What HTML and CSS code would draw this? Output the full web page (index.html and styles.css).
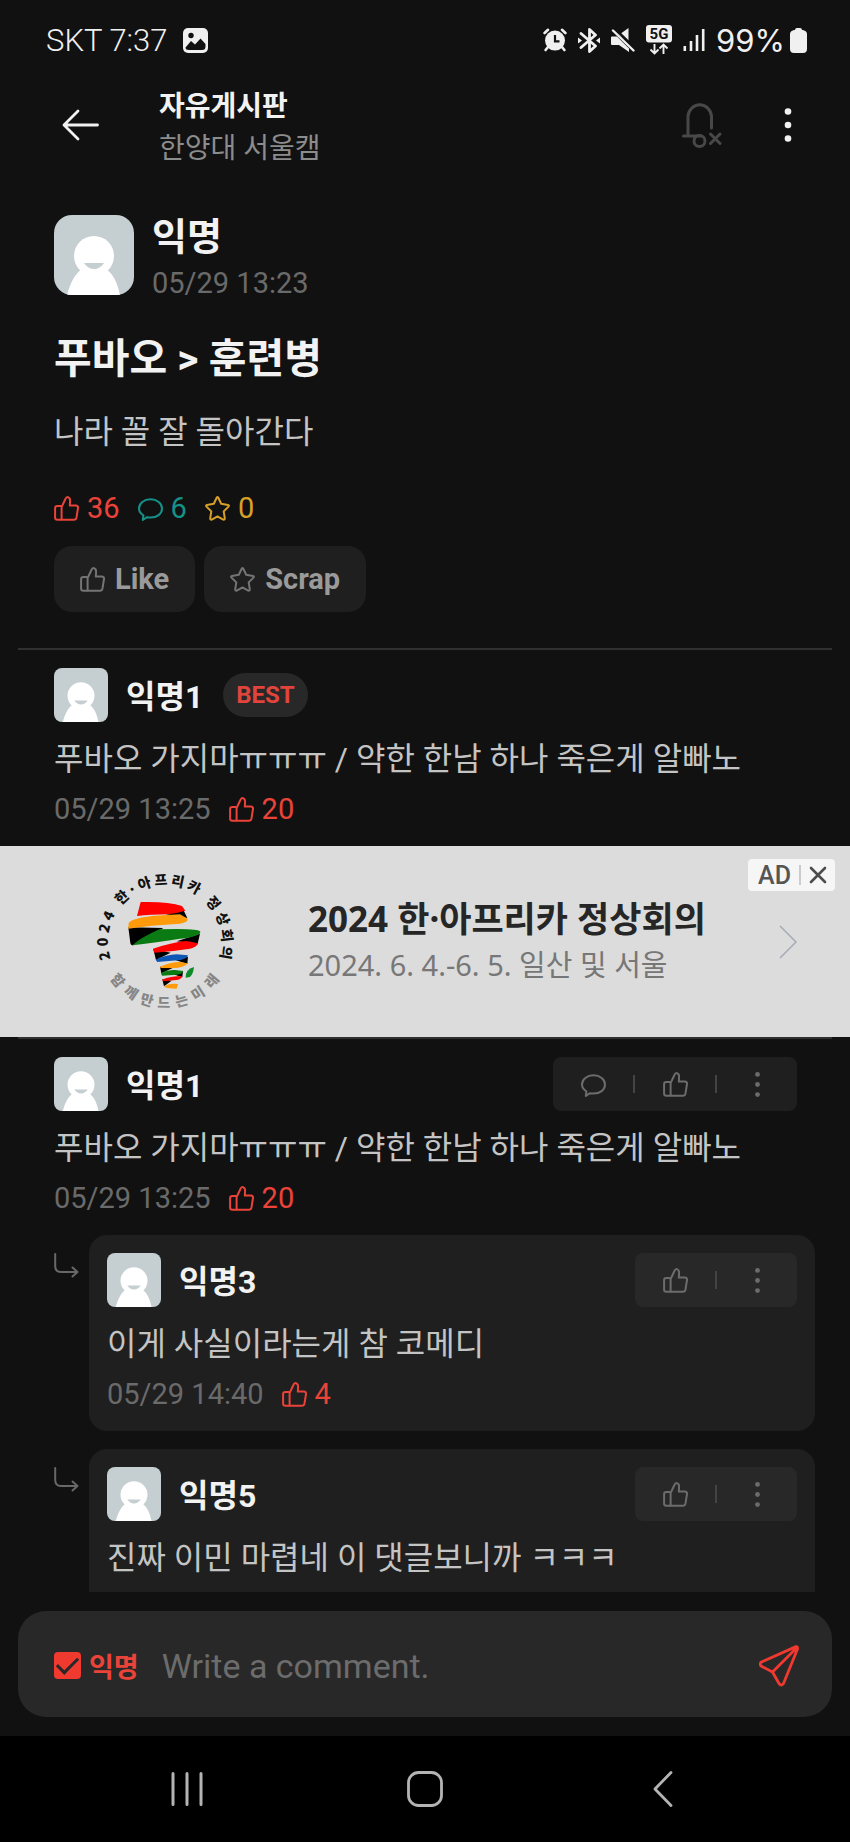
FILE: index.html
```html
<!DOCTYPE html>
<html lang="ko">
<head>
<meta charset="utf-8">
<meta name="viewport" content="width=device-width, initial-scale=1">
<title>자유게시판</title>
<link rel="stylesheet" href="styles.css">
</head>
<body>
<svg class="sprite" aria-hidden="true">
  <symbol id="thumb" viewBox="0 0 25 25">
    <g fill="none" stroke="currentColor" stroke-width="2" stroke-linejoin="round">
      <path d="M7.600 10H3.400C2 10 1.100 10.900 1.100 12.300V21.500C1.100 22.900 2 23.800 3.400 23.800H7.600"/>
      <path d="M7.600 11.200L11.400 3C12.200 1.100 13.200.9 14 1.100C15.600 1.700 16.200 3 16.100 4.800L15.800 9.600H21.800C23.400 9.600 24.200 10.600 24 12L22.500 21.400C22.200 23 21.300 23.800 19.900 23.800H7.600Z"/>
    </g>
  </symbol>
  <symbol id="bubble" viewBox="0 0 25 25">
    <path fill="none" stroke="currentColor" stroke-width="2" stroke-linejoin="round" d="M4.800 24L5.400 19.400C2.500 17.600 1 15.200 1 12.600C1 7.200 6 3.300 12.500 3.300S24 7.200 24 12.600S19 21.600 12.500 21.600C11.300 21.600 10.100 21.500 9 21.200Z"/>
  </symbol>
  <symbol id="star" viewBox="0 0 25 25">
    <path fill="none" stroke="currentColor" stroke-width="2" stroke-linejoin="round" d="M11.700 1.700Q12.500.5 13.300 1.700L16.200 7.800L23 8.900Q24.500 9.400 23.500 10.600L18.700 15.400L19.800 22.300Q19.800 24.100 18.200 23.600L12.500 20.400L6.800 23.600Q5.200 24.100 5.200 22.300L6.300 15.400L1.500 10.600Q.5 9.400 2 8.900L8.800 7.800Z"/>
  </symbol>
  <symbol id="dots" viewBox="0 0 25 25">
    <g fill="currentColor"><circle cx="12.500" cy="2.400" r="2.400"/><circle cx="12.500" cy="12.500" r="2.400"/><circle cx="12.500" cy="22.600" r="2.400"/></g>
  </symbol>
  <symbol id="face" viewBox="0 0 80 80">
    <rect width="80" height="80" fill="#c5ced1"/>
    <path fill="#fff" d="M13 80C17 66 21 59 28 54C36 48 44 48 52 54C59 59 63 66 66 80Z"/>
    <circle cx="40" cy="41" r="20" fill="#fff"/>
    <path fill="#c5ced1" d="M30 48H50C47 52 44 54 40 54S33 52 30 48Z"/>
  </symbol>
  <symbol id="turn" viewBox="0 0 25 25">
    <path fill="none" stroke="currentColor" stroke-width="2" stroke-linecap="round" stroke-linejoin="round" d="M1.200 1V13Q1.200 19 7 19H23.500M18.500 14.500L23.500 19L18.500 23.500"/>
  </symbol>
</svg>

<div class="statusbar">
  <div class="status-left">
    <span>SKT 7:37</span>
    <svg width="25" height="25" viewBox="0 0 25 25"><rect width="25" height="25" rx="5" fill="#f0f0f0"/><circle cx="8" cy="7.500" r="2.700" fill="#111"/><path fill="#111" d="M2.500 19.500L8 13L12 16.500L17.500 10.500L22.500 16V18.500Q22.500 22 19 22H6Q2.500 22 2.500 19.500Z"/></svg>
  </div>
  <div class="status-right">
    <svg width="24" height="24" viewBox="0 0 24 24"><g fill="none" stroke="#f0f0f0" stroke-width="2.600" stroke-linecap="round"><path d="M1.600 5L5 1.800M22.400 5L19 1.800M5 19L2.600 22M19 19L21.400 22"/></g><circle cx="12" cy="12.600" r="10" fill="#f0f0f0"/><path d="M12 7V13.400H16.500" fill="none" stroke="#111" stroke-width="2.200"/></svg>
    <svg width="22" height="25" viewBox="0 0 22 25"><path d="M3 5.500L17.500 18L11.500 23.500V1.500L17.500 7L3 19.500" fill="none" stroke="#f0f0f0" stroke-width="2.800" stroke-linejoin="round" stroke-linecap="round"/><path d="M0 9.500L4 12.500L0 15.500ZM22 9.500L18 12.500L22 15.500Z" fill="#f0f0f0"/></svg>
    <svg width="24" height="24" viewBox="0 0 24 24"><path fill="#f0f0f0" d="M8.500 6.500L17.500 0V13.500ZM1 8.500H6L18 20.500V24L8 17H1Q0 17 0 15.500V9.500Q0 8.500 1 8.500Z"/><path d="M3.500 0L24 20" stroke="#111" stroke-width="2"/><path d="M2 2.500L22.500 22.500" stroke="#f0f0f0" stroke-width="2.400" stroke-linecap="round"/></svg>
    <svg width="26" height="30" viewBox="0 0 26 30"><rect width="26" height="17.500" rx="3" fill="#f0f0f0"/><text class="net" x="13" y="14" text-anchor="middle">5G</text><path d="M8.500 19V28M4.500 24.500L8.500 28.500L12.500 24.500M17.500 29V20M13.500 23.500L17.500 19.500L21.500 23.500" fill="none" stroke="#f0f0f0" stroke-width="1.900"/></svg>
    <svg width="22" height="24" viewBox="0 0 22 24"><path d="M1.800 18V23M8 13V23M14 7V23M20.200 1V23" stroke="#f0f0f0" stroke-width="2.600"/></svg>
    <span class="battery">99%<svg width="17" height="25" viewBox="0 0 17 25"><path fill="#f0f0f0" d="M5 2Q5 0 7 0H10Q12 0 12 2H13Q17 3 17 6V21Q17 25 13 25H4Q0 25 0 21V6Q0 3 4 2Z"/></svg></span>
  </div>
</div>

<header class="topbar">
  <button class="icon-btn" aria-label="뒤로"><svg width="37" height="32" viewBox="0 0 37 32"><path d="M35.500 16H2M16 2L2 16L16 30" fill="none" stroke="#f2f2f2" stroke-width="2.800" stroke-linecap="round" stroke-linejoin="round"/></svg></button>
  <div class="board">
    <h1>자유게시판</h1>
    <p>한양대 서울캠</p>
  </div>
  <button class="icon-btn" aria-label="알림 꺼짐"><svg width="40" height="46" viewBox="0 0 40 46"><g fill="none" stroke="#484848" stroke-width="3" stroke-linecap="round"><path d="M1.500 34H19M6 33V14A11.800 12.300 0 0 1 29.500 14V26"/><circle cx="17.500" cy="39" r="5.500"/><path d="M28.500 32L38 41.500M38 32L28.500 41.500"/></g></svg></button>
  <button class="icon-btn" aria-label="메뉴"><svg width="8" height="34" viewBox="0 0 8 34"><g fill="#f2f2f2"><circle cx="4" cy="3.500" r="3.300"/><circle cx="4" cy="17" r="3.300"/><circle cx="4" cy="30.500" r="3.300"/></g></svg></button>
</header>

<main>
  <article class="post">
    <div class="author">
      <svg class="avatar-lg"><use href="#face"/></svg>
      <div class="author-text">
        <strong>익명</strong>
        <time>05/29 13:23</time>
      </div>
    </div>
    <h2>푸바오 &gt; 훈련병</h2>
    <p class="post-text">나라 꼴 잘 돌아간다</p>
    <div class="stats">
      <span class="stat red"><svg class="icon"><use href="#thumb"/></svg>36</span>
      <span class="stat teal"><svg class="icon"><use href="#bubble"/></svg>6</span>
      <span class="stat gold"><svg class="icon"><use href="#star"/></svg>0</span>
    </div>
    <div class="post-actions">
      <button><svg class="icon"><use href="#thumb"/></svg>Like</button>
      <button><svg class="icon"><use href="#star"/></svg>Scrap</button>
    </div>
  </article>

  <section class="comment">
    <div class="comment-head">
      <svg class="avatar"><use href="#face"/></svg>
      <strong>익명1</strong>
      <span class="best">BEST</span>
    </div>
    <p>푸바오 가지마ㅠㅠㅠ / 약한 한남 하나 죽은게 알빠노</p>
    <div class="meta"><time>05/29 13:25</time><span class="stat red"><svg class="icon"><use href="#thumb"/></svg>20</span></div>
  </section>

  <aside class="ad">
    <svg class="ad-logo" width="150" height="150" viewBox="0 0 150 150">
      <defs>
        <path id="ring-top" d="M75 132A57 57 0 0 1 75 18A57 57 0 0 1 75 132"/>
        <path id="ring-bottom" d="M75 9A66 66 0 0 0 75 141A66 66 0 0 0 75 9"/>
      </defs>
      <text class="ring"><textPath href="#ring-top" startOffset="21.4%">2</textPath><textPath href="#ring-top" startOffset="25%">0</textPath><textPath href="#ring-top" startOffset="28.6%">2</textPath><textPath href="#ring-top" startOffset="32%">4</textPath><textPath href="#ring-top" startOffset="37.8%">한</textPath><textPath href="#ring-top" startOffset="41.1%">·</textPath><textPath href="#ring-top" startOffset="44.6%">아</textPath><textPath href="#ring-top" startOffset="48.9%">프</textPath><textPath href="#ring-top" startOffset="53.3%">리</textPath><textPath href="#ring-top" startOffset="57.8%">카</textPath><textPath href="#ring-top" startOffset="64.2%">정</textPath><textPath href="#ring-top" startOffset="68.9%">상</textPath><textPath href="#ring-top" startOffset="73.3%">회</textPath><textPath href="#ring-top" startOffset="77.8%">의</textPath></text>
      <text class="ring ring-gray"><textPath href="#ring-bottom" startOffset="35.9%">함</textPath><textPath href="#ring-bottom" startOffset="40.6%">께</textPath><textPath href="#ring-bottom" startOffset="45.2%">만</textPath><textPath href="#ring-bottom" startOffset="49.7%">드</textPath><textPath href="#ring-bottom" startOffset="54.4%">는</textPath><textPath href="#ring-bottom" startOffset="59.1%">미</textPath><textPath href="#ring-bottom" startOffset="63.9%">래</textPath></text>
      <g transform="translate(-90 -25) scale(.3333)">
        <path fill="#000" d="M550 203L562 228L498 217Z"/>
        <path fill="#f00" d="M422 180Q505 178 546 192L556 206Q535 212 505 217Q450 218 411 222Z"/>
        <path fill="#000" d="M385 256L490 258L400 310Q392 310 391 302Z"/>
        <path fill="#ff9a0a" d="M386 243Q400 224 500 219L540 217L563 230Q566 240 540 245Q450 250 385 260Z"/>
        <path fill="#000" d="M600 275L593 305L530 298Z"/>
        <path fill="#0a7a12" d="M478 262Q595 258 601 269Q602 283 540 290Q460 302 397 310Q420 288 478 262Z"/>
        <path fill="#000" d="M460 322L512 332L468 354ZM564 344L562 366L526 354Z"/>
        <path fill="#f00" d="M459 320Q520 300 560 297L595 304Q590 316 570 320Q520 328 463 332Z"/>
        <path fill="#0f57b5" d="M467 353Q500 338 530 337L564 340Q562 350 542 354L472 360Z"/>
        <path fill="#000" d="M480 374L518 378L484 394ZM549 388L547 406L518 396Z"/>
        <path fill="#ff9a0a" d="M480 374Q510 360 540 360L563 364Q555 375 530 378L482 378Z"/>
        <path fill="#0a7a12" d="M483 393Q505 382 525 384L550 387Q547 396 530 398L486 401Z"/>
        <path fill="#000" d="M487 412L515 416L492 433Z"/>
        <path fill="#f00" d="M487 413Q510 402 547 402Q545 411 530 414L489 418Z"/>
        <path fill="#ff9a0a" d="M492 435Q505 422 534 426L530 440Q505 440 492 435Z"/>
        <path fill="#0f8a2a" d="M557 407Q556 382 582 375Q580 396 570 405Z"/>
      </g>
    </svg>
    <div class="ad-copy">
      <strong>2024 한·아프리카 정상회의</strong>
      <span>2024. 6. 4.-6. 5. 일산 및 서울</span>
    </div>
    <svg class="ad-arrow" width="18" height="34" viewBox="0 0 18 34"><path d="M1 1L17 17L1 33" fill="none" stroke="#a5abb5" stroke-width="1.500"/></svg>
    <button class="ad-badge" aria-label="광고 닫기">AD<i></i><svg width="18" height="18" viewBox="0 0 18 18"><path d="M2 2L16 16M16 2L2 16" stroke="#4c4c4c" stroke-width="2.600" stroke-linecap="round"/></svg></button>
  </aside>

  <section class="comment">
    <div class="comment-head">
      <svg class="avatar"><use href="#face"/></svg>
      <strong>익명1</strong>
      <div class="tools">
        <button aria-label="답글"><svg class="icon"><use href="#bubble"/></svg></button><i></i>
        <button aria-label="공감"><svg class="icon"><use href="#thumb"/></svg></button><i></i>
        <button aria-label="더보기"><svg class="icon"><use href="#dots"/></svg></button>
      </div>
    </div>
    <p>푸바오 가지마ㅠㅠㅠ / 약한 한남 하나 죽은게 알빠노</p>
    <div class="meta"><time>05/29 13:25</time><span class="stat red"><svg class="icon"><use href="#thumb"/></svg>20</span></div>
  </section>

  <div class="reply">
    <svg class="icon turn"><use href="#turn"/></svg>
    <section class="card">
      <div class="comment-head">
        <svg class="avatar"><use href="#face"/></svg>
        <strong>익명3</strong>
        <div class="tools">
          <button aria-label="공감"><svg class="icon"><use href="#thumb"/></svg></button><i></i>
          <button aria-label="더보기"><svg class="icon"><use href="#dots"/></svg></button>
        </div>
      </div>
      <p>이게 사실이라는게 참 코메디</p>
      <div class="meta"><time>05/29 14:40</time><span class="stat red"><svg class="icon"><use href="#thumb"/></svg>4</span></div>
    </section>
  </div>

  <div class="reply">
    <svg class="icon turn"><use href="#turn"/></svg>
    <section class="card card-cut">
      <div class="comment-head">
        <svg class="avatar"><use href="#face"/></svg>
        <strong>익명5</strong>
        <div class="tools">
          <button aria-label="공감"><svg class="icon"><use href="#thumb"/></svg></button><i></i>
          <button aria-label="더보기"><svg class="icon"><use href="#dots"/></svg></button>
        </div>
      </div>
      <p>진짜 이민 마렵네 이 댓글보니까 ㅋㅋㅋ</p>
    </section>
  </div>
</main>

<form class="composer">
  <label class="anon"><input type="checkbox" checked>익명</label>
  <input class="write" type="text" placeholder="Write a comment." aria-label="Write a comment.">
  <button type="button" class="send" aria-label="보내기"><svg width="40" height="42" viewBox="0 0 40 42"><path d="M37 1.600Q39 1.500 38.500 4L24.500 38.500Q22.500 41.500 20 38.500L13.500 27L2 21Q0 18.500 2.500 17ZM38 2.500L13.500 27" fill="none" stroke="#f0392f" stroke-width="2.800" stroke-linejoin="round"/></svg></button>
</form>

<nav class="navbar">
  <button aria-label="최근 앱"><svg width="34" height="36" viewBox="0 0 34 36"><path d="M3 2.500V33.500M17 2.500V33.500M31 2.500V33.500" stroke="#b4b4b4" stroke-width="3" stroke-linecap="round"/></svg></button>
  <button aria-label="홈"><svg width="36" height="36" viewBox="0 0 36 36"><rect x="1.500" y="1.500" width="33" height="33" rx="10" fill="none" stroke="#b4b4b4" stroke-width="2.800"/></svg></button>
  <button aria-label="뒤로"><svg width="20" height="36" viewBox="0 0 20 36"><path d="M18 1.500L2 18L18 34.500" fill="none" stroke="#b4b4b4" stroke-width="2.800" stroke-linecap="round" stroke-linejoin="round"/></svg></button>
</nav>
</body>
</html>
```

FILE: styles.css
```css
* { box-sizing: border-box; }

body {
  margin: 0;
  min-height: 100vh;
  display: flex;
  flex-direction: column;
  background: #111;
  color: #c4c4c4;
  font-family: Roboto, "Noto Sans CJK KR", sans-serif;
  font-size: 29px;
}

h1, h2, p { margin: 0; }
button { border: 0; padding: 0; background: none; color: inherit; font: inherit; display: flex; align-items: center; justify-content: center; }
svg { display: block; flex: none; }
.sprite { position: absolute; width: 0; height: 0; }
.icon { width: 25px; height: 25px; }
time { color: #6a6a6a; }
.red { color: #ea4339; }
.teal { color: #159288; }
.gold { color: #d6a02a; }

/* Status bar */
.statusbar { display: flex; justify-content: space-between; align-items: center; height: 80px; padding: 0 43px 0 46px; color: #f0f0f0; font-size: 31px; }
.status-left, .status-right { display: flex; align-items: center; }
.status-left { gap: 15px; font-weight: 300; }
.status-right { gap: 11px; }
.battery { display: flex; align-items: center; gap: 5px; font-family: Inter, sans-serif; }
.net { font: bold 15px Roboto, sans-serif; fill: #111; }

/* Header */
.topbar { display: flex; align-items: center; height: 90px; padding: 0 58px 0 62px; }
.board { flex: 1; margin-left: 60px; padding-top: 6px; font-size: 28px; line-height: 42px; }
.board h1 { font-size: 28px; color: #f2f2f2; }
.board p { color: #8c8c8c; }
.board ~ .icon-btn + .icon-btn { margin-left: 62px; }

/* Post */
.post { padding: 45px 54px 36px; }
.author { display: flex; align-items: center; gap: 18px; height: 80px; }
.avatar-lg { width: 80px; height: 80px; border-radius: 18px; }
.author-text { padding-top: 8px; }
.author strong { display: block; font-size: 38px; line-height: 48px; color: #f2f2f2; }
.author time { display: block; line-height: 44px; }
.post h2 { margin-top: 38px; font-size: 41px; line-height: 52px; color: #f2f2f2; }
.post-text { margin-top: 26px; font-size: 32px; line-height: 42px; }
.stats { display: flex; gap: 18px; margin-top: 38px; line-height: 34px; }
.stat { display: flex; align-items: center; gap: 8px; }
.post-actions { display: flex; gap: 9px; margin-top: 21px; }
.post-actions button { gap: 10px; height: 66px; padding: 0 26px; border-radius: 18px; background: #1f1f1f; color: #9a9a9a; font-weight: bold; }
.post-actions .icon { color: #747474; }

/* Comments */
.comment { margin: 0 18px; padding: 18px 35px 20px 36px; border-top: 2px solid #303030; }
.comment-head { display: flex; align-items: center; height: 54px; gap: 18px; }
.avatar { width: 54px; height: 54px; border-radius: 8px; }
.comment-head strong { padding-top: 5px; font-size: 32px; line-height: 49px; color: #f2f2f2; }
.best { margin-left: 2px; padding: 0 13px; border-radius: 22px; background: #282828; color: #e0443c; font-size: 24px; font-weight: bold; line-height: 44px; }
.comment p, .card p { margin-top: 16px; font-size: 32px; line-height: 42px; }
.meta { display: flex; gap: 18px; margin-top: 12px; line-height: 34px; }
.tools { display: flex; align-items: center; height: 54px; margin-left: auto; border-radius: 8px; background: #1f1f1f; color: #6c6c6c; }
.tools button { width: 80px; height: 54px; }
.tools i { width: 2px; height: 18px; background: #444; }

.reply { display: flex; align-items: flex-start; gap: 10px; padding: 0 35px 18px 54px; }
.turn { margin-top: 18px; color: #686868; }
.card { flex: 1; padding: 18px 18px 20px; border-radius: 18px; background: #1f1f1f; }
.card .tools { background: #282828; }
.reply:last-child { padding-bottom: 0; }
.card-cut { padding-bottom: 13px; border-radius: 18px 18px 0 0; }

/* Ad banner */
.ad { position: relative; display: flex; align-items: center; height: 191px; padding: 0 53px 0 90px; background: #dcdcdc; font-family: "Noto Sans", "Noto Sans CJK KR", sans-serif; }
.ad-copy { flex: 1; margin-left: 68px; line-height: 46px; }
.ad-copy strong { display: block; font-size: 35px; color: #262626; }
.ad-copy span { display: block; font-size: 29px; color: #777; }
.ring { font: 900 14px "Noto Sans CJK KR", sans-serif; fill: #111; text-anchor: middle; }
.ring-gray { fill: #858585; }
.ad-badge { position: absolute; top: 13px; right: 15px; height: 32px; padding: 0 8px 0 10px; border-radius: 4px; background: #f6f6f6; color: #555; font: 500 25px Roboto, sans-serif; }
.ad-badge i { width: 2px; height: 20px; margin: 0 8px; background: #ccc; }

/* Composer */
.composer { display: flex; align-items: center; height: 106px; margin: 19px 18px; padding: 3px 33px 0 36px; border-radius: 28px; background: #282828; }
.anon { display: flex; align-items: center; gap: 8px; color: #ea4339; font-size: 27px; font-weight: bold; }
.anon input { appearance: none; display: grid; place-content: center; width: 27px; height: 27px; margin: 0; border-radius: 4px; background: #f0392f; }
.anon input:checked::after { content: ""; width: 18px; height: 9px; margin-bottom: 6px; border: solid #282828; border-width: 0 0 3px 3px; transform: rotate(-45deg); }
.write { flex: 1; min-width: 0; margin-left: 23px; padding: 0; border: 0; outline: 0; background: none; color: #c4c4c4; font: inherit; font-size: 34px; }
.write::placeholder { color: #6c6c6c; opacity: 1; }

/* System navigation */
.navbar { flex: 1; display: grid; grid-template-columns: repeat(3, 1fr); align-items: center; min-height: 106px; padding: 0 68px; background: #000; }
```
